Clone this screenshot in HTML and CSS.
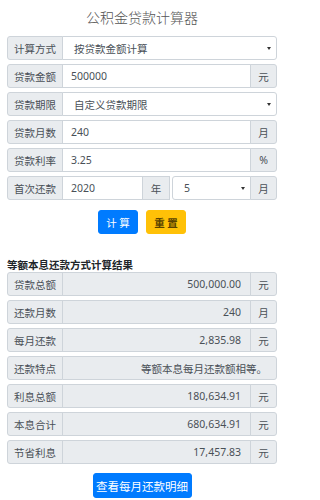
FILE: index.html
```html
<!DOCTYPE html>
<html lang="zh">
<head>
<meta charset="utf-8">
<title>公积金贷款计算器</title>
<link rel="stylesheet" href="styles.css">
</head>
<body>
<div class="page">
  <h1 class="title">公积金贷款计算器</h1>

  <div class="ig">
    <span class="lbl">计算方式</span>
    <div class="sel grow">按贷款金额计算<span class="caret"></span></div>
  </div>
  <div class="ig">
    <span class="lbl">贷款金额</span>
    <input class="inp grow" type="text" value="500000">
    <span class="unit">元</span>
  </div>
  <div class="ig">
    <span class="lbl">贷款期限</span>
    <div class="sel grow">自定义贷款期限<span class="caret"></span></div>
  </div>
  <div class="ig">
    <span class="lbl">贷款月数</span>
    <input class="inp grow" type="text" value="240">
    <span class="unit">月</span>
  </div>
  <div class="ig">
    <span class="lbl">贷款利率</span>
    <input class="inp grow" type="text" value="3.25">
    <span class="unit">%</span>
  </div>
  <div class="ig">
    <span class="lbl">首次还款</span>
    <input class="inp year" type="text" value="2020">
    <span class="unit unit-mid">年</span>
    <div class="sel grow month">5<span class="caret"></span></div>
    <span class="unit">月</span>
  </div>

  <div class="actions">
    <button class="btn btn-blue" type="button">计 算</button>
    <button class="btn btn-yellow" type="button">重 置</button>
  </div>

  <h2 class="result-title">等额本息还款方式计算结果</h2>

  <div class="ig">
    <span class="lbl">贷款总额</span>
    <input class="inp grow ro" type="text" value="500,000.00" readonly>
    <span class="unit">元</span>
  </div>
  <div class="ig">
    <span class="lbl">还款月数</span>
    <input class="inp grow ro" type="text" value="240" readonly>
    <span class="unit">月</span>
  </div>
  <div class="ig">
    <span class="lbl">每月还款</span>
    <input class="inp grow ro" type="text" value="2,835.98" readonly>
    <span class="unit">元</span>
  </div>
  <div class="ig">
    <span class="lbl">还款特点</span>
    <input class="inp grow ro last" type="text" value="等额本息每月还款额相等。" readonly>
  </div>
  <div class="ig">
    <span class="lbl">利息总额</span>
    <input class="inp grow ro" type="text" value="180,634.91" readonly>
    <span class="unit">元</span>
  </div>
  <div class="ig">
    <span class="lbl">本息合计</span>
    <input class="inp grow ro" type="text" value="680,634.91" readonly>
    <span class="unit">元</span>
  </div>
  <div class="ig">
    <span class="lbl">节省利息</span>
    <input class="inp grow ro" type="text" value="17,457.83" readonly>
    <span class="unit">元</span>
  </div>

  <div class="detail">
    <button class="btn btn-blue btn-detail" type="button">查看每月还款明细</button>
  </div>
</div>
</body>
</html>
```

FILE: styles.css
```css
* { box-sizing: border-box; }

body {
  margin: 0;
  background: #fff;
  font-family: "Noto Sans", "Noto Sans CJK SC", sans-serif;
  color: #495057;
}

.page {
  width: 270px;
  margin-left: 7px;
}

.title {
  margin: 0;
  height: 36px;
  line-height: 36px;
  text-align: center;
  font-size: 14px;
  font-weight: 300;
  color: #555;
}

.ig {
  display: flex;
  height: 24px;
  margin-bottom: 4px;
}

.lbl,
.unit {
  display: flex;
  align-items: center;
  justify-content: center;
  background: #e9ecef;
  border: 1px solid #ced4da;
  font-size: 10.5px;
  color: #495057;
  white-space: nowrap;
}

.lbl {
  width: 56px;
  flex: none;
  border-radius: 3px 0 0 3px;
}

.unit {
  width: 27px;
  flex: none;
  margin-left: -1px;
  border-radius: 0 3px 3px 0;
}

.unit-mid {
  border-radius: 0;
  width: 28px;
}

.inp,
.sel {
  margin: 0 0 0 -1px;
  height: 24px;
  border: 1px solid #ced4da;
  background: #fff;
  font-family: inherit;
  font-size: 10.5px;
  color: #495057;
  min-width: 0;
  outline: none;
}

.inp {
  padding: 0 8px;
  border-radius: 0;
}

.grow { flex: 1 1 auto; }

.year {
  width: 81px;
  flex: none;
}

.sel {
  display: flex;
  align-items: center;
  justify-content: space-between;
  padding: 0 5px 0 11px;
  border-radius: 0 3px 3px 0;
}

.month {
  margin-left: 2px;
  border-radius: 3px 0 0 3px;
}

.caret {
  width: 0;
  height: 0;
  border-left: 2.5px solid transparent;
  border-right: 2.5px solid transparent;
  border-top: 3.5px solid #333;
}

.ro {
  background: #e9ecef;
  text-align: right;
  padding-right: 9px;
}

.ro.last {
  border-radius: 0 3px 3px 0;
}

.actions {
  display: flex;
  justify-content: center;
  gap: 8px;
  padding-top: 6px;
}

.btn {
  height: 24px;
  width: 40px;
  padding: 0;
  border: 1px solid transparent;
  border-radius: 3px;
  font-family: inherit;
  font-size: 10.5px;
  cursor: pointer;
}

.btn-blue {
  background: #007bff;
  border-color: #007bff;
  color: #fff;
}

.btn-yellow {
  background: #ffc107;
  border-color: #ffc107;
  color: #5a4300;
  font-weight: 700;
}

.result-title {
  margin: 24px 0 0;
  height: 14px;
  line-height: 14px;
  font-size: 10.5px;
  font-weight: 700;
  color: #212529;
}

.result-title + .ig { margin-top: 0; }

.detail {
  display: flex;
  justify-content: center;
  padding-top: 5px;
}

.btn-detail {
  width: 99px;
  height: 25px;
  font-size: 11.5px;
}
```
